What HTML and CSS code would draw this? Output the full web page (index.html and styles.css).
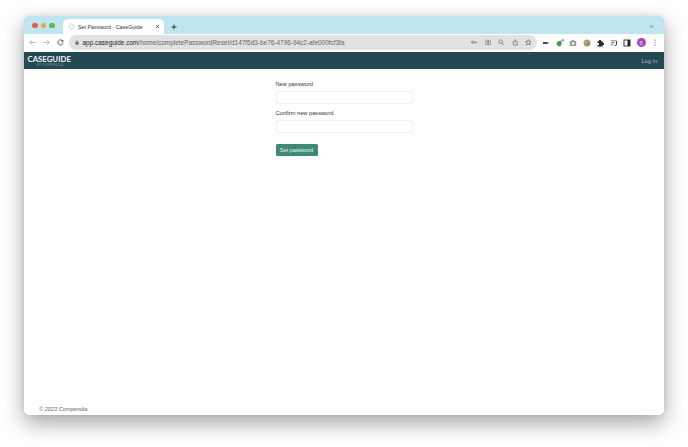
FILE: index.html
```html
<!DOCTYPE html>
<html>
<head>
    <meta charset="utf-8">
    <title>Set Password - CaseGuide</title>
    <link rel="stylesheet" href="styles.css">
</head>
<body>
    <div class="window">
        <div class="tabstrip">
            <div class="lights">
                <span class="light red"></span>
                <span class="light yellow"></span>
                <span class="light green"></span>
            </div>
            <div class="tab">
                <svg class="favicon" viewBox="0 0 8 8"><path d="M4 .8 7.2 4 4 7.2.8 4z" fill="none" stroke="#9cb" stroke-width=".9"/></svg>
                <span class="tab-title">Set Password - CaseGuide</span>
                <svg class="tab-close" viewBox="0 0 6 6"><path d="M1 1l4 4M5 1L1 5" stroke="#333" stroke-width=".9"/></svg>
            </div>
            <svg class="new-tab" viewBox="0 0 7 7"><path d="M3.5 .5v6M.5 3.5h6" stroke="#222" stroke-width="1"/></svg>
            <svg class="tab-menu" viewBox="0 0 6 4"><path d="M.8.8 3 3 5.2.8" fill="none" stroke="#444" stroke-width=".9"/></svg>
        </div>

        <div class="toolbar">
            <svg class="tool" viewBox="0 0 8 8"><path d="M7.5 4H1M3.6 1.3.9 4l2.7 2.7" fill="none" stroke="#9a9a9a" stroke-width=".8"/></svg>
            <svg class="tool" viewBox="0 0 8 8"><path d="M.5 4H7M4.4 1.3 7.1 4 4.4 6.7" fill="none" stroke="#9a9a9a" stroke-width=".8"/></svg>
            <svg class="tool" viewBox="0 0 8 8"><path d="M6.6 2.4A3 3 0 1 0 7 4.4" fill="none" stroke="#333" stroke-width=".9"/><path d="M7.2.8v2.4H4.8z" fill="#333"/></svg>
            <div class="omnibox">
                <svg class="lock" viewBox="0 0 6 7"><path d="M1.7 3V2a1.3 1.3 0 0 1 2.6 0v1" fill="none" stroke="#555" stroke-width=".7"/><rect x=".8" y="3" width="4.4" height="3.4" rx=".5" fill="#555"/></svg>
                <span class="url"><span class="url-host">app.caseguide.com</span>/home/completePasswordReset/d147f5d3-be76-4796-94c2-afe000fcf3fa</span>
                <div class="omni-icons">
                    <svg class="omni-icon" viewBox="0 0 8 8"><circle cx="2" cy="4" r="1.3" fill="none" stroke="#555" stroke-width=".8"/><path d="M3.3 4h4.2M6.3 4v1.3" stroke="#555" stroke-width=".8" fill="none"/></svg>
                    <svg class="omni-icon" viewBox="0 0 8 8"><path d="M2 1H1v6h6V1H6" fill="none" stroke="#666" stroke-width=".7"/><circle cx="4" cy="3" r="1.4" fill="#666"/><path d="M2.5 6c.3-1 2.7-1 3 0" fill="#666"/></svg>
                    <svg class="omni-icon" viewBox="0 0 8 8"><circle cx="3.3" cy="3.3" r="2.3" fill="none" stroke="#666" stroke-width=".8"/><path d="M5 5l2.5 2.5" stroke="#666" stroke-width=".8"/></svg>
                    <svg class="omni-icon" viewBox="0 0 8 8"><path d="M2.5 3H1.500v4.500h5V3H5.500" fill="none" stroke="#666" stroke-width=".8"/><path d="M4 5V.8M2.800 2 4 .8 5.200 2" fill="none" stroke="#666" stroke-width=".8"/></svg>
                    <svg class="omni-icon" viewBox="0 0 8 8"><path d="M4 .7l1 2.200 2.400.3-1.800 1.600.5 2.400L4 6l-2.100 1.200.5-2.400L.6 3.200 3 2.900z" fill="none" stroke="#444" stroke-width=".7"/></svg>
                </div>
            </div>
            <div class="extensions">
                <svg class="ext" viewBox="0 0 8 8"><rect x="1" y="3" width="4.500" height="2" fill="#444"/><path d="M5.500 4h1.500" stroke="#444" stroke-width=".7"/></svg>
                <svg class="ext" viewBox="0 0 8 8"><path d="M.6 4.300C1 2.400 3 1.400 5 1.800c1 1.500 1 4.200-.8 5.700C2.400 7.800.3 6.300.6 4.300z" fill="#4c9a52"/><circle cx="6.700" cy="1.300" r="1.100" fill="#3b8ac4"/></svg>
                <svg class="ext" viewBox="0 0 8 8"><rect x=".8" y="2" width="6.400" height="5" rx=".8" fill="#999"/><rect x="2.800" y="1" width="2.400" height="1.500" fill="#999"/><circle cx="4" cy="4.500" r="1.400" fill="#eee"/></svg>
                <svg class="ext" viewBox="0 0 8 8"><circle cx="4" cy="4" r="3.500" fill="#a89a78"/><circle cx="3" cy="3" r=".9" fill="#d9b44a"/><circle cx="5" cy="5" r="1" fill="#777"/></svg>
                <svg class="ext" viewBox="0 0 8 8"><path d="M3 1h2v1.300h1.700V4H8v2H6.700v1.500H1.500V6H3V4H1.500V2.300H3z" fill="#2b2b2b"/></svg>
                <svg class="ext" viewBox="0 0 8 8"><path d="M.8 1.800h5M.8 3.800h4M.8 5.800h2.500" stroke="#555" stroke-width=".8"/><path d="M6.500 1.800v4M4.800 6.300h1.700" stroke="#222" stroke-width=".9"/></svg>
                <svg class="ext" viewBox="0 0 8 8"><rect x="1" y="1" width="6" height="6" fill="none" stroke="#222" stroke-width=".9"/><rect x="4.500" y="1" width="2.500" height="6" fill="#222"/></svg>
                <span class="avatar">B</span>
                <svg class="kebab" viewBox="0 0 2 8"><circle cx="1" cy="1.200" r=".7" fill="#555"/><circle cx="1" cy="4" r=".7" fill="#555"/><circle cx="1" cy="6.800" r=".7" fill="#555"/></svg>
            </div>
        </div>

        <nav class="navbar">
            <div class="brand">
                <div class="brand-name">CASEGUIDE</div>
                <div class="brand-sub">BY COMPENDIA</div>
            </div>
            <a class="login">Log In</a>
        </nav>

        <main class="content">
            <form class="reset-form">
                <label class="field-label">New password</label>
                <input class="field-input" type="password">
                <label class="field-label">Confirm new password</label>
                <input class="field-input" type="password">
                <button class="submit" type="button">Set password</button>
            </form>
        </main>

        <footer class="footer">© 2023 Compendia</footer>
    </div>
</body>
</html>
```

FILE: styles.css
```css
html, body {
    margin: 0;
    height: 100%;
    background-color: white;
}

body {
    padding: 16px 24px 32px 24px;
    box-sizing: border-box;
    font-family: "Liberation Sans", sans-serif;
    overflow: hidden;
}

.window {
    display: flex;
    flex-direction: column;
    height: 399px;
    background-color: white;
    border-radius: 5px;
    overflow: hidden;
    box-shadow: 0 8px 22px rgba(0, 0, 0, 0.36), 0 0 4px rgba(0, 0, 0, 0.08);
}

.tabstrip {
    display: flex;
    align-items: flex-end;
    height: 18px;
    background-color: #bfe6f0;
    flex-shrink: 0;
}

.lights {
    display: flex;
    gap: 3px;
    align-self: flex-start;
    margin: 6.500px 0 0 8px;
}

.light {
    width: 5.500px;
    height: 5.500px;
    border-radius: 50%;
}

.red { background-color: #e5584f; }
.yellow { background-color: #e0ac3a; }
.green { background-color: #5fb955; }

.tab {
    display: flex;
    align-items: center;
    width: 101px;
    height: 15px;
    margin-left: 8.500px;
    padding: 0 4px 0 4.500px;
    box-sizing: border-box;
    background-color: white;
    border-radius: 5px 5px 0 0;
}

.favicon {
    width: 7px;
    height: 7px;
    margin-right: 3.500px;
}

.tab-title {
    flex: 1;
    font-size: 5.350px;
    color: #333;
    white-space: nowrap;
}

.tab-close {
    width: 5px;
    height: 5px;
}

.new-tab {
    width: 6px;
    height: 6px;
    margin: 0 0 4.500px 7px;
}

.tab-menu {
    width: 5px;
    height: 3px;
    margin: 0 10.500px 6px auto;
}

.toolbar {
    display: flex;
    align-items: center;
    height: 17px;
    padding-left: 5px;
    background-color: white;
    flex-shrink: 0;
}

.tool {
    width: 7px;
    height: 7px;
    margin-right: 7px;
}

.omnibox {
    display: flex;
    align-items: center;
    width: 468px;
    height: 15px;
    margin-left: -2.500px;
    padding: 0 5px 0 6px;
    box-sizing: border-box;
    background-color: #e1e1e1;
    border-radius: 8px;
}

.lock {
    width: 4px;
    height: 5px;
    margin-right: 4px;
}

.url {
    flex: 1;
    font-size: 6.450px;
    color: #666;
    white-space: nowrap;
}

.url-host {
    color: #262626;
}

.omni-icons {
    display: flex;
    gap: 7px;
}

.omni-icon {
    width: 6.500px;
    height: 6.500px;
}

.extensions {
    display: flex;
    align-items: center;
    gap: 5.500px;
    margin-left: 5.500px;
}

.ext {
    width: 8px;
    height: 8px;
}

.avatar {
    display: flex;
    align-items: center;
    justify-content: center;
    width: 9.500px;
    height: 9.500px;
    border-radius: 50%;
    background-color: #a846b8;
    color: #e8cdee;
    font-size: 5px;
}

.kebab {
    width: 2px;
    height: 7px;
    margin-left: 2px;
}

.navbar {
    display: flex;
    align-items: center;
    justify-content: space-between;
    height: 17px;
    margin-top: 1px;
    padding: 0 7px 0 3.500px;
    background-color: #254953;
    flex-shrink: 0;
}

.brand {
    display: flex;
    flex-direction: column;
    align-self: flex-start;
    margin-top: 2.500px;
}

.brand-name {
    font-family: Lato, sans-serif;
    font-size: 7.800px;
    font-weight: 700;
    line-height: 8px;
    color: #f2f5f6;
}

.brand-sub {
    margin-left: 9px;
    font-family: Lato, sans-serif;
    font-size: 3.500px;
    line-height: 4px;
    color: #6f8a92;
}

.login {
    font-size: 5.600px;
    color: #a9bac0;
}

.content {
    flex: 1;
    display: flex;
    justify-content: center;
}

.reset-form {
    display: flex;
    flex-direction: column;
    width: 137px;
    padding-top: 12px;
}

.field-label {
    height: 7px;
    margin-bottom: 3px;
    font-size: 5.700px;
    line-height: 7px;
    color: #333;
}

.field-input {
    height: 13px;
    margin: 0 0 6px 0;
    padding: 0;
    box-sizing: border-box;
    background-color: white;
    border: 1px solid #f0f0f0;
    border-radius: 1px;
}

.submit {
    width: 42px;
    height: 12px;
    margin-top: 5px;
    padding: 0;
    border: none;
    border-radius: 1.500px;
    background-color: #3f8a76;
    color: #e9f3f0;
    font-family: "Liberation Sans", sans-serif;
    font-size: 5.500px;
}

.footer {
    padding: 0 0 3px 15px;
    font-size: 5.600px;
    font-style: italic;
    color: #666;
}
```
